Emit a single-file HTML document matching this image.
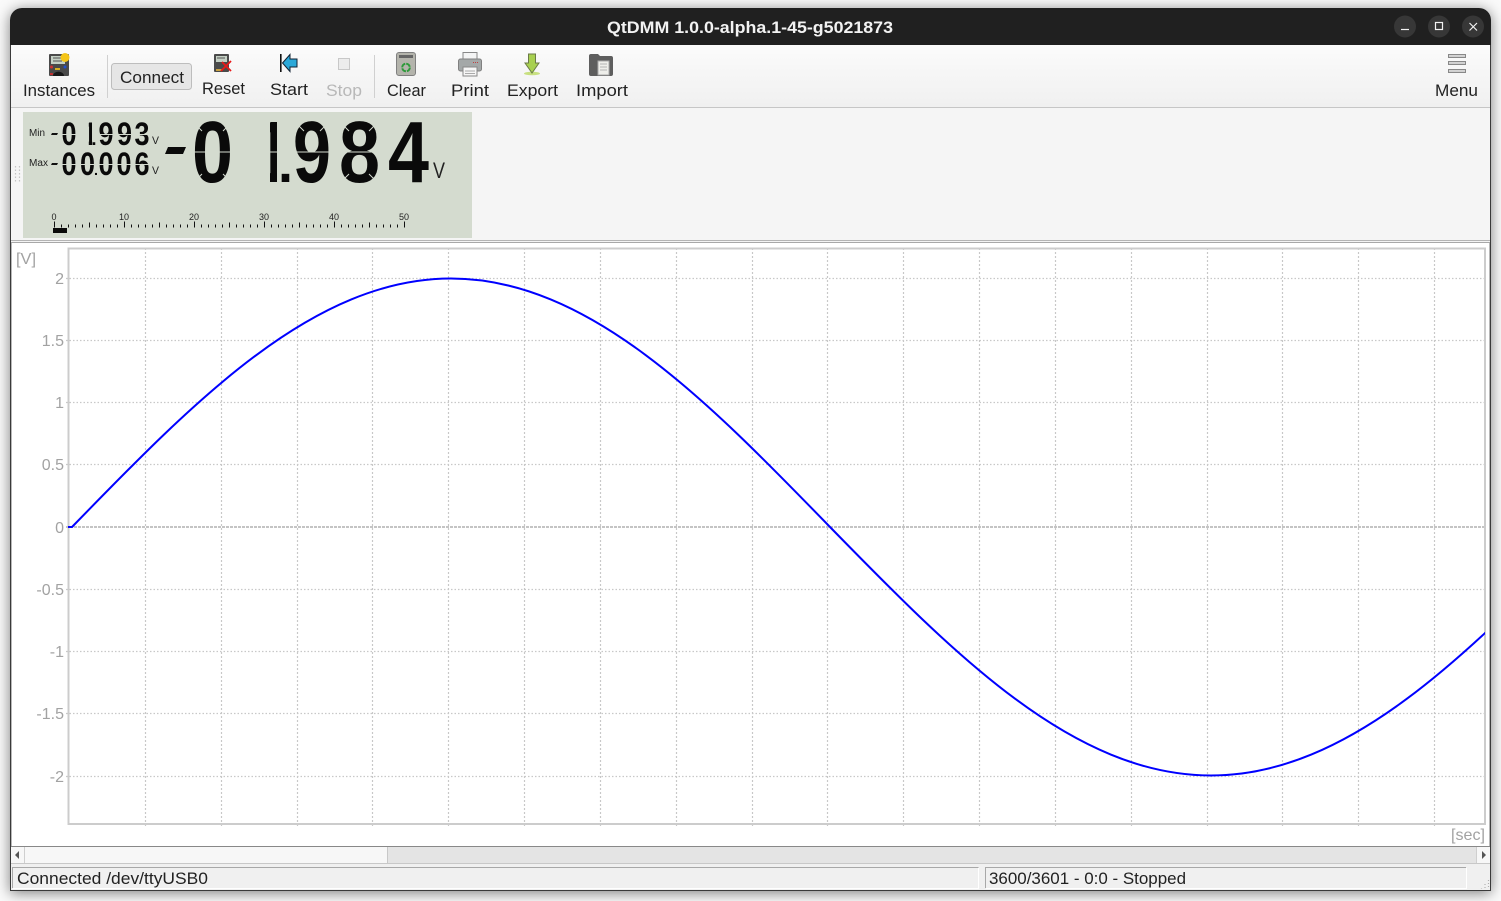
<!DOCTYPE html>
<html><head><meta charset="utf-8"><title>QtDMM</title>
<style>
html,body{margin:0;padding:0;width:1501px;height:901px;overflow:hidden;background:#fafafa}
#shadow{position:absolute;left:10px;top:8px;width:1481px;height:883px;border-radius:12px 12px 0 0;box-shadow:0 2px 14px rgba(0,0,0,.5)}
svg{position:absolute;left:0;top:0}
text{font-family:"Liberation Sans",sans-serif;font-size:16.5px;fill:#222}
.t{font-size:16.5px}
.ax{fill:#a2a2a2;font-size:16px}
.lcd{font-weight:bold;fill:#0a0a0a}
.b{font-size:87px}
.s{font-size:32px}
.r{font-size:9px;fill:#222}
</style></head><body>
<div id="shadow"></div>
<svg width="1501" height="901" viewBox="0 0 1501 901" xmlns="http://www.w3.org/2000/svg">
<defs>
<linearGradient id="tb" x1="0" y1="0" x2="0" y2="1"><stop offset="0" stop-color="#fbfbfb"/><stop offset="1" stop-color="#f0f0f0"/></linearGradient>
<linearGradient id="bar" x1="0" y1="0" x2="0" y2="1"><stop offset="0" stop-color="#f2f2f2"/><stop offset=".5" stop-color="#c4c4c4"/><stop offset="1" stop-color="#e8e8e8"/></linearGradient>
<clipPath id="plot"><rect x="68" y="248" width="1417" height="576"/></clipPath>
</defs>

<!-- window body -->
<path d="M10 891V20a12 12 0 0 1 12-12H1479a12 12 0 0 1 12 12V891Z" fill="#f4f4f4"/>
<path d="M10 45V20a12 12 0 0 1 12-12H1479a12 12 0 0 1 12 12V45Z" fill="#202020"/>
<text x="607" y="33" textLength="286" lengthAdjust="spacingAndGlyphs" style="font-weight:bold;font-size:16.5px;fill:#f2f2f2">QtDMM 1.0.0-alpha.1-45-g5021873</text>
<circle cx="1405" cy="26.5" r="11" fill="#373737"/><circle cx="1439" cy="26.5" r="11" fill="#373737"/><circle cx="1473" cy="26.5" r="11" fill="#373737"/>
<path d="M1401 29.5h8" stroke="#f2f2f2" stroke-width="1.2" fill="none"/>
<rect x="1435.5" y="22.5" width="7" height="7" stroke="#f2f2f2" stroke-width="1.2" fill="none"/>
<path d="M1469.5 23l7.5 7.5M1477 23l-7.5 7.5" stroke="#f2f2f2" stroke-width="1.2" fill="none"/>

<!-- toolbar -->
<rect x="11" y="45" width="1479" height="62" fill="url(#tb)"/>
<rect x="11" y="107" width="1479" height="1" fill="#c6c6c6"/>
<rect x="107" y="55" width="1" height="43" fill="#d0d0d0"/>
<rect x="374" y="55" width="1" height="43" fill="#d0d0d0"/>
<rect x="111.5" y="63.5" width="80" height="26" rx="3" fill="#e6e6e6" stroke="#bdbdbd"/>

<text class="t" x="23" y="96" textLength="72" lengthAdjust="spacingAndGlyphs">Instances</text>
<text class="t" x="120" y="83" textLength="64" lengthAdjust="spacingAndGlyphs">Connect</text>
<text class="t" x="202" y="94" textLength="43" lengthAdjust="spacingAndGlyphs">Reset</text>
<text class="t" x="270" y="95" textLength="38" lengthAdjust="spacingAndGlyphs">Start</text>
<text class="t" x="326" y="96" textLength="36" lengthAdjust="spacingAndGlyphs" style="fill:#b8b8b8">Stop</text>
<text class="t" x="387" y="96" textLength="39" lengthAdjust="spacingAndGlyphs">Clear</text>
<text class="t" x="451" y="96" textLength="38" lengthAdjust="spacingAndGlyphs">Print</text>
<text class="t" x="507" y="96" textLength="51" lengthAdjust="spacingAndGlyphs">Export</text>
<text class="t" x="576" y="96" textLength="52" lengthAdjust="spacingAndGlyphs">Import</text>
<text class="t" x="1435" y="96" textLength="43" lengthAdjust="spacingAndGlyphs">Menu</text>

<!-- instances icon -->
<rect x="49" y="54" width="20" height="22" rx="1" fill="#4a4a4a"/>
<rect x="51" y="56" width="14" height="8" fill="#c4d0c4"/>
<path d="M53 58h9M53 61h9" stroke="#555" stroke-width="1"/>
<circle cx="51.5" cy="67" r="1.5" fill="#d03030"/><circle cx="65" cy="67" r="1.5" fill="#2050d0"/><path d="M55 69h5" stroke="#d8b020" stroke-width="2"/>
<path d="M53 76a5 4 0 0 1 11 0z" fill="#181818"/><path d="M50 74h3" stroke="#c03030" stroke-width="2"/>
<circle cx="65" cy="57.5" r="4.5" fill="#f5c518"/>
<!-- reset icon -->
<rect x="214" y="54" width="15" height="18" rx="1" fill="#4a4a4a"/>
<rect x="216" y="56" width="11" height="6" fill="#c4d0c4"/>
<path d="M217 58h8" stroke="#555"/>
<path d="M216 70h6" stroke="#c8a040" stroke-width="2"/>
<path d="M222 62l9 9M231 61l-10 10" stroke="#e81818" stroke-width="1.8" fill="none"/>
<!-- start icon -->
<rect x="280" y="54" width="1.6" height="18" fill="#111"/>
<path d="M282.5 63l7.5-8.500v4.500h7v8h-7v4.500z" fill="#2ba8d8" stroke="#123" stroke-width="1"/>
<!-- stop icon -->
<rect x="338.5" y="58.5" width="11" height="11" fill="#ececec" stroke="#c8c8c8"/>
<!-- clear icon -->
<rect x="396.5" y="52.5" width="19" height="23" rx="2.5" fill="#b4b4ac" stroke="#808080"/>
<rect x="399" y="55" width="14" height="3" fill="#666"/>
<circle cx="406" cy="67.5" r="3.8" fill="none" stroke="#2d9a3a" stroke-width="2" stroke-dasharray="5 1"/>
<!-- print icon -->
<rect x="463" y="52.5" width="14" height="7" fill="#f4f4f4" stroke="#888"/>
<rect x="458.5" y="59" width="23" height="12" rx="2" fill="#a4a8a8" stroke="#808080"/>
<rect x="463" y="67" width="14" height="9" fill="#f6f6f6" stroke="#888"/>
<path d="M465 71h10M465 73.5h10" stroke="#aaa"/>
<path d="M473 62.5h1M475 62.5h1M477 62.5h1" stroke="#c04040"/>
<!-- export icon -->
<ellipse cx="532" cy="73.5" rx="8" ry="1.8" fill="#c8e080"/>
<path d="M528.5 54h7v9h3.500l-7 10-7-10h3.500z" fill="#a8d050" stroke="#6b7a48" stroke-width="1"/>
<!-- import icon -->
<path d="M589 56a2 2 0 0 1 2-2h7l2 2h11a2 2 0 0 1 2 2v16a2 2 0 0 1-2 2H591a2 2 0 0 1-2-2z" fill="#5e5e5e"/>
<rect x="598" y="61" width="11" height="14" fill="#eeeeea" stroke="#aaa"/>
<path d="M600 64h7M600 67h7M600 70h7" stroke="#b4b4b4"/>
<!-- menu icon -->
<rect x="1448.5" y="54.5" width="17" height="3" fill="url(#bar)" stroke="#888"/>
<rect x="1448.5" y="61.5" width="17" height="3" fill="url(#bar)" stroke="#888"/>
<rect x="1448.5" y="69.5" width="17" height="3" fill="url(#bar)" stroke="#888"/>

<!-- LCD row -->
<rect x="11" y="108" width="1479" height="132" fill="#f5f5f5"/>
<path d="M15.5 166v16M19.5 166v16" stroke="#c4c4c4" stroke-width="1.2" stroke-dasharray="1.5 2"/>
<rect x="23" y="112" width="449" height="126" fill="#d4dbcf"/>

<text class="r" x="29" y="136" style="font-size:10px" textLength="16" lengthAdjust="spacingAndGlyphs">Min</text>
<text class="r" x="29" y="166" style="font-size:10px" textLength="19" lengthAdjust="spacingAndGlyphs">Max</text>
<path d="M52 133h6l-1 2h-6zM52 163h6l-1 2h-6z" fill="#111"/>

<!-- small digits row 1: -0 1.993 -->
<text class="lcd s" x="61.5" y="145" textLength="15" lengthAdjust="spacingAndGlyphs">0</text>
<text class="lcd s" x="84" y="145" textLength="12" lengthAdjust="spacingAndGlyphs">1</text>
<rect x="82" y="120" width="6.800" height="27" fill="#d4dbcf"/>
<rect x="92.200" y="138" width="4" height="9" fill="#d4dbcf"/>
<text class="lcd" x="91.500" y="145" style="font-size:18px" textLength="5" lengthAdjust="spacingAndGlyphs">.</text>
<text class="lcd s" x="98.5" y="145" textLength="15" lengthAdjust="spacingAndGlyphs">9</text>
<text class="lcd s" x="117" y="145" textLength="15" lengthAdjust="spacingAndGlyphs">9</text>
<text class="lcd s" x="134.5" y="145" textLength="15" lengthAdjust="spacingAndGlyphs">3</text>
<!-- row 2: -00.006 -->
<text class="lcd s" x="61.5" y="175" textLength="15" lengthAdjust="spacingAndGlyphs">0</text>
<text class="lcd s" x="80" y="175" textLength="15" lengthAdjust="spacingAndGlyphs">0</text>
<text class="lcd" x="94" y="175" style="font-size:14px" textLength="4" lengthAdjust="spacingAndGlyphs">.</text>
<text class="lcd s" x="98.5" y="175" textLength="15" lengthAdjust="spacingAndGlyphs">0</text>
<text class="lcd s" x="116.5" y="175" textLength="15" lengthAdjust="spacingAndGlyphs">0</text>
<text class="lcd s" x="134.5" y="175" textLength="15" lengthAdjust="spacingAndGlyphs">6</text>
<text class="r" x="152" y="144" style="font-size:11px" textLength="7" lengthAdjust="spacingAndGlyphs">V</text>
<text class="r" x="152" y="174" style="font-size:11px" textLength="7" lengthAdjust="spacingAndGlyphs">V</text>

<!-- big reading -->
<path d="M168 147h18l-3 7h-18z" fill="#0a0a0a"/>
<text class="lcd b" x="192" y="182" textLength="41" lengthAdjust="spacingAndGlyphs">0</text>
<text class="lcd b" x="259" y="182" textLength="27" lengthAdjust="spacingAndGlyphs">1</text>
<rect x="256" y="116" width="14" height="70" fill="#d4dbcf"/>
<rect x="277" y="165" width="14" height="20" fill="#d4dbcf"/>
<text class="lcd" x="278" y="182" style="font-size:55px" textLength="15" lengthAdjust="spacingAndGlyphs">.</text>
<text class="lcd b" x="293" y="182" textLength="38" lengthAdjust="spacingAndGlyphs">9</text>
<text class="lcd b" x="339" y="182" textLength="41" lengthAdjust="spacingAndGlyphs">8</text>
<text class="lcd b" x="388" y="182" textLength="41" lengthAdjust="spacingAndGlyphs">4</text>
<text class="r" x="433" y="178" style="font-size:22px" textLength="12" lengthAdjust="spacingAndGlyphs">V</text>
<!-- segment break hints -->
<path d="M190 152h44M266 152h14M293 152h38M339 152h41M61 134.5h16M98 134.5h16M116 134.5h16M134 134.5h16M61 164.5h16M80 164.5h16M98 164.5h16M116 164.5h16M134 164.5h16" stroke="#d4dbcf" stroke-width="1" fill="none"/>
<path d="M195 124l7 7M230 124l-7 7M195 181l7-7M230 181l-7-7M342 124l7 7M376 124l-7 7M342 181l7-7M376 181l-7-7M297 124l7 7M327 124l-7 7" stroke="#d4dbcf" stroke-width="1" fill="none"/>

<!-- ruler -->
<text class="r" x="51.5" y="220">0</text><text class="r" x="119" y="220">10</text><text class="r" x="189" y="220">20</text><text class="r" x="259" y="220">30</text><text class="r" x="329" y="220">40</text><text class="r" x="399" y="220">50</text>
<path d="M54 226h351" stroke="#111" stroke-width="3" stroke-dasharray="1 6" fill="none"/>
<path d="M54 225h351" stroke="#111" stroke-width="5" stroke-dasharray="1 34" fill="none"/>
<path d="M54 224.5h351" stroke="#111" stroke-width="6" stroke-dasharray="1 69" fill="none"/>
<rect x="53" y="228" width="14" height="5" fill="#0a0a0a"/>

<!-- plot -->
<rect x="11" y="240" width="1479" height="1" fill="#b4b4b4"/>
<rect x="10" y="242" width="1481" height="1" fill="#a8a8a8"/>
<rect x="11" y="243" width="1479" height="604" fill="#fff"/>
<rect x="10" y="243" width="1.5" height="604" fill="#707070"/>
<rect x="1489.5" y="243" width="1.5" height="604" fill="#707070"/>
<rect x="10" y="846" width="1481" height="1" fill="#888"/>

<path d="M145.5 248V827M221.5 248V827M297.5 248V827M372.5 248V827M448.5 248V827M524.5 248V827M600.5 248V827M676.5 248V827M752.5 248V827M827.5 248V827M903.5 248V827M979.5 248V827M1055.5 248V827M1131.5 248V827M1207.5 248V827M1282.5 248V827M1358.5 248V827M1434.5 248V827" stroke="#c8c8c8" stroke-width="1.2" stroke-dasharray="2 2" fill="none"/>
<path d="M66 278.5H1485M66 340.5H1485M66 402.5H1485M66 464.5H1485M66 589.5H1485M66 651.5H1485M66 713.5H1485M66 776.5H1485" stroke="#c8c8c8" stroke-width="1.2" stroke-dasharray="1.5 2" fill="none"/>
<path d="M66 527H1485" stroke="#b0b0b0" stroke-width="1.6" stroke-dasharray="3 1" fill="none"/>
<path d="M68.5 824V248.5H1485V824H68.5Z" stroke="#cccccc" stroke-width="2" fill="none"/>

<text class="ax" x="16" y="264" textLength="20" lengthAdjust="spacingAndGlyphs">[V]</text>
<text class="ax" x="64" y="284" text-anchor="end">2</text>
<text class="ax" x="64" y="346" text-anchor="end">1.5</text>
<text class="ax" x="64" y="408" text-anchor="end">1</text>
<text class="ax" x="64" y="470" text-anchor="end">0.5</text>
<text class="ax" x="64" y="533" text-anchor="end">0</text>
<text class="ax" x="64" y="595" text-anchor="end">-0.5</text>
<text class="ax" x="64" y="657" text-anchor="end">-1</text>
<text class="ax" x="64" y="719" text-anchor="end">-1.5</text>
<text class="ax" x="64" y="782" text-anchor="end">-2</text>
<text class="ax" x="1451" y="840" textLength="34" lengthAdjust="spacingAndGlyphs">[sec]</text>

<g clip-path="url(#plot)">
<path d="M68 527H72C195.6 399.7 313.8 278.5 451 278.5C588.2 278.5 706.4 399.7 830 527C954.3 654.3 1073.1 775.5 1211 775.5C1348.9 775.5 1467.7 654.3 1592 527" fill="none" stroke="#0000ff" stroke-width="2"/>
</g>

<!-- scrollbar -->
<rect x="11" y="847" width="1479" height="17" fill="#e4e4e4"/>
<rect x="11" y="847" width="377" height="16" fill="#f7f7f7"/>
<rect x="24" y="847" width="1" height="16" fill="#cfcfcf"/>
<rect x="387" y="847" width="1" height="16" fill="#c8c8c8"/>
<rect x="1476" y="847" width="1" height="16" fill="#cfcfcf"/>
<rect x="1477" y="847" width="13" height="16" fill="#f7f7f7"/>
<rect x="11" y="863" width="1479" height="1" fill="#c8c8c8"/>
<path d="M15 855l4-4v8zM1486 855l-4-4v8z" fill="#555"/>

<!-- status bar -->
<rect x="11" y="864" width="1479" height="27" fill="#f0f0f0"/>
<path d="M12.5 888V867.5H978.5" stroke="#a8a8a8" fill="none"/>
<path d="M13 888.5H978.5V868" stroke="#ffffff" fill="none"/>
<path d="M985.5 888V867.5H1466" stroke="#a8a8a8" fill="none"/>
<path d="M986 888.5H1466.5V868" stroke="#ffffff" fill="none"/>
<text class="t" x="17" y="884" textLength="191" lengthAdjust="spacingAndGlyphs">Connected /dev/ttyUSB0</text>
<text class="t" x="989" y="884" textLength="197" lengthAdjust="spacingAndGlyphs">3600/3601 - 0:0 - Stopped</text>
<path d="M1488.5 880v8M1485 884v4M1481.5 888v.5" stroke="#b0b0b0" stroke-width="1.2" stroke-dasharray="1 2" fill="none"/>
<path d="M10.5 891V45M1490.5 891V45M10 890.5H1491" stroke="#3a3a3a" stroke-width="1" fill="none"/>
</svg>
</body></html>
